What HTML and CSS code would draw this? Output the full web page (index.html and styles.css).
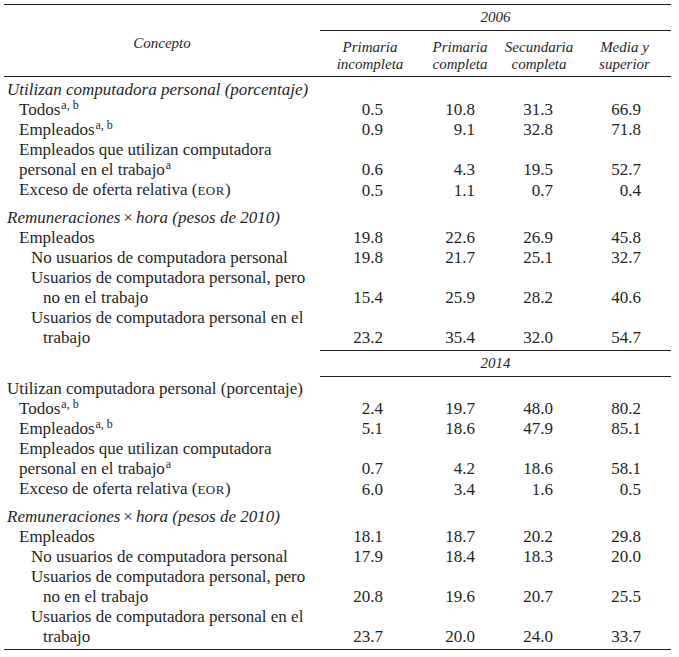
FILE: index.html
```html
<!DOCTYPE html>
<html lang="es">
<head>
<meta charset="utf-8">
<title>Cuadro</title>
<link rel="stylesheet" href="styles.css">
</head>
<body>
<table class="tbl">
  <colgroup>
    <col class="c-label">
    <col class="c-1">
    <col class="c-2">
    <col class="c-3">
    <col class="c-4">
  </colgroup>
  <thead>
    <tr class="h1">
      <th rowspan="2" class="concept">Concepto</th>
      <th colspan="4" class="year">2006</th>
    </tr>
    <tr class="h2">
      <th>Primaria<br>incompleta</th>
      <th>Primaria<br>completa</th>
      <th>Secundaria<br>completa</th>
      <th>Media y<br>superior</th>
    </tr>
  </thead>
  <tbody>
    <tr class="first">
      <td class="lab sec it">Utilizan computadora personal (porcentaje)</td>
      <td class="n n1"></td><td class="n n2"></td><td class="n n3"></td><td class="n n4"></td>
    </tr>
    <tr>
      <td class="lab l1">Todos<sup class="note">a, b</sup></td>
      <td class="n n1">0.5</td><td class="n n2">10.8</td><td class="n n3">31.3</td><td class="n n4">66.9</td>
    </tr>
    <tr>
      <td class="lab l1">Empleados<sup class="note">a, b</sup></td>
      <td class="n n1">0.9</td><td class="n n2">9.1</td><td class="n n3">32.8</td><td class="n n4">71.8</td>
    </tr>
    <tr>
      <td class="lab l1">Empleados que utilizan computadora<br>personal en el trabajo<sup class="note">a</sup></td>
      <td class="n n1">0.6</td><td class="n n2">4.3</td><td class="n n3">19.5</td><td class="n n4">52.7</td>
    </tr>
    <tr>
      <td class="lab l1">Exceso de oferta relativa (<span class="sc">EOR</span>)</td>
      <td class="n n1">0.5</td><td class="n n2">1.1</td><td class="n n3">0.7</td><td class="n n4">0.4</td>
    </tr>
    <tr class="gap">
      <td class="lab sec it">Remuneraciones<span class="times">×</span>hora (pesos de 2010)</td>
      <td class="n n1"></td><td class="n n2"></td><td class="n n3"></td><td class="n n4"></td>
    </tr>
    <tr>
      <td class="lab l1">Empleados</td>
      <td class="n n1">19.8</td><td class="n n2">22.6</td><td class="n n3">26.9</td><td class="n n4">45.8</td>
    </tr>
    <tr>
      <td class="lab l2">No usuarios de computadora personal</td>
      <td class="n n1">19.8</td><td class="n n2">21.7</td><td class="n n3">25.1</td><td class="n n4">32.7</td>
    </tr>
    <tr>
      <td class="lab l2">Usuarios de computadora personal, pero<br>no en el trabajo</td>
      <td class="n n1">15.4</td><td class="n n2">25.9</td><td class="n n3">28.2</td><td class="n n4">40.6</td>
    </tr>
    <tr class="last">
      <td class="lab l2">Usuarios de computadora personal en el<br>trabajo</td>
      <td class="n n1">23.2</td><td class="n n2">35.4</td><td class="n n3">32.0</td><td class="n n4">54.7</td>
    </tr>

    <tr class="yr">
      <td class="blank"></td>
      <td colspan="4" class="year">2014</td>
    </tr>

    <tr class="first">
      <td class="lab sec">Utilizan computadora personal (porcentaje)</td>
      <td class="n n1"></td><td class="n n2"></td><td class="n n3"></td><td class="n n4"></td>
    </tr>
    <tr>
      <td class="lab l1">Todos<sup class="note">a, b</sup></td>
      <td class="n n1">2.4</td><td class="n n2">19.7</td><td class="n n3">48.0</td><td class="n n4">80.2</td>
    </tr>
    <tr>
      <td class="lab l1">Empleados<sup class="note">a, b</sup></td>
      <td class="n n1">5.1</td><td class="n n2">18.6</td><td class="n n3">47.9</td><td class="n n4">85.1</td>
    </tr>
    <tr>
      <td class="lab l1">Empleados que utilizan computadora<br>personal en el trabajo<sup class="note">a</sup></td>
      <td class="n n1">0.7</td><td class="n n2">4.2</td><td class="n n3">18.6</td><td class="n n4">58.1</td>
    </tr>
    <tr>
      <td class="lab l1">Exceso de oferta relativa (<span class="sc">EOR</span>)</td>
      <td class="n n1">6.0</td><td class="n n2">3.4</td><td class="n n3">1.6</td><td class="n n4">0.5</td>
    </tr>
    <tr class="gap">
      <td class="lab sec it">Remuneraciones<span class="times">×</span>hora (pesos de 2010)</td>
      <td class="n n1"></td><td class="n n2"></td><td class="n n3"></td><td class="n n4"></td>
    </tr>
    <tr>
      <td class="lab l1">Empleados</td>
      <td class="n n1">18.1</td><td class="n n2">18.7</td><td class="n n3">20.2</td><td class="n n4">29.8</td>
    </tr>
    <tr>
      <td class="lab l2">No usuarios de computadora personal</td>
      <td class="n n1">17.9</td><td class="n n2">18.4</td><td class="n n3">18.3</td><td class="n n4">20.0</td>
    </tr>
    <tr>
      <td class="lab l2">Usuarios de computadora personal, pero<br>no en el trabajo</td>
      <td class="n n1">20.8</td><td class="n n2">19.6</td><td class="n n3">20.7</td><td class="n n4">25.5</td>
    </tr>
    <tr class="last">
      <td class="lab l2">Usuarios de computadora personal en el<br>trabajo</td>
      <td class="n n1">23.7</td><td class="n n2">20.0</td><td class="n n3">24.0</td><td class="n n4">33.7</td>
    </tr>
  </tbody>
</table>
</body>
</html>
```

FILE: styles.css
```css
html, body {
  background: #ffffff;
}

body {
  margin: 0;
  padding: 4px 0 0 4px;
  color: #1f1f1f;
  font-family: "Liberation Serif", "Times New Roman", serif;
  font-size: 17px;
}

.tbl {
  border-collapse: collapse;
  table-layout: fixed;
  width: 667px;
  border-top: 1px solid #1f1f1f;
  border-bottom: 1px solid #1f1f1f;
}

.c-label { width: 316px; }
.c-1 { width: 100px; }
.c-2 { width: 80px; }
.c-3 { width: 78px; }
.c-4 { width: 93px; }

.tbl th,
.tbl td {
  padding: 0;
  font-weight: normal;
  line-height: 20px;
}

/* header */
.tbl .concept {
  font-size: 15px;
  font-style: italic;
  text-align: center;
  vertical-align: middle;
  border-bottom: 1px solid #1f1f1f;
  padding-top: 4px;
}

.tbl .year {
  font-size: 15px;
  font-style: italic;
  text-align: center;
  height: 25px;
  line-height: 25px;
  border-bottom: 1px solid #1f1f1f;
}

.tbl .h2 th {
  font-size: 15px;
  font-style: italic;
  text-align: center;
  line-height: 17px;
  padding: 8px 0 3px;
  border-bottom: 1px solid #1f1f1f;
}

/* 2014 year row */
.tbl .yr .year {
  border-top: 1px solid #1f1f1f;
  border-bottom: 1px solid #1f1f1f;
}

.tbl .yr .blank {
  border: 0;
}

/* body */
.tbl .lab {
  white-space: nowrap;
  vertical-align: bottom;
}

.tbl .sec { padding-left: 3px; }
.tbl .it { font-style: italic; }

.tbl .l1 { padding-left: 15px; }

.tbl .l2 {
  padding-left: 39px;
  text-indent: -12px;
}

.tbl .n {
  text-align: right;
  vertical-align: bottom;
  white-space: nowrap;
}

.tbl .n1 { padding-right: 37px; }
.tbl .n2 { padding-right: 25px; }
.tbl .n3 { padding-right: 25px; }
.tbl .n4 { padding-right: 30px; }

.tbl .first td { padding-top: 3px; }
.tbl .gap td { padding-top: 7px; }
.tbl .last td { padding-bottom: 2px; }

.note {
  font-size: 12px;
  line-height: 0;
  vertical-align: 6px;
  margin-left: 1px;
}

.sc {
  font-size: 13px;
  letter-spacing: 0.5px;
}

.times {
  font-style: normal;
  padding: 0 3px;
}
```
